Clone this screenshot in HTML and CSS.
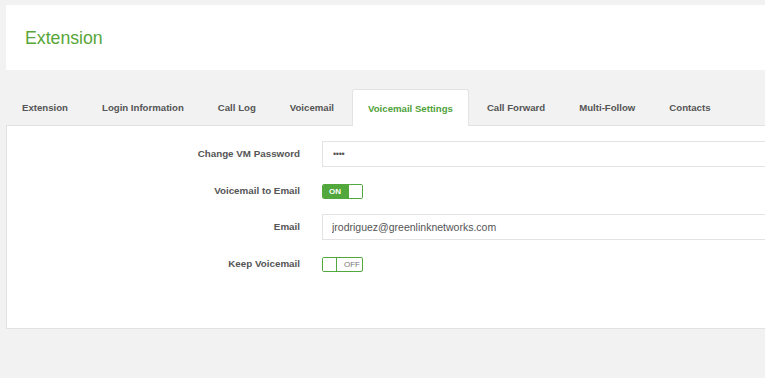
FILE: index.html
```html
<!DOCTYPE html>
<html lang="en">
<head>
    <meta charset="UTF-8">
    <title>Extension - Voicemail Settings</title>
    <link rel="stylesheet" href="styles.css">
</head>
<body>

<div class="page">
    <header class="page-header">
        <h1>Extension</h1>
    </header>

    <ul class="nav-tabs">
        <li class="tab">Extension</li>
        <li class="tab">Login Information</li>
        <li class="tab">Call Log</li>
        <li class="tab">Voicemail</li>
        <li class="tab active">Voicemail Settings</li>
        <li class="tab">Call Forward</li>
        <li class="tab">Multi-Follow</li>
        <li class="tab">Contacts</li>
    </ul>

    <div class="tab-panel">
        <form class="settings-form">
            <div class="form-row">
                <label>Change VM Password</label>
                <input type="text" class="field field-password" value="&bull;&bull;&bull;&bull;">
            </div>
            <div class="form-row toggle-row">
                <label>Voicemail to Email</label>
                <div class="switch on">
                    <span class="switch-label">ON</span>
                    <span class="switch-knob"></span>
                </div>
            </div>
            <div class="form-row">
                <label>Email</label>
                <input type="text" class="field" value="jrodriguez@greenlinknetworks.com">
            </div>
            <div class="form-row toggle-row">
                <label>Keep Voicemail</label>
                <div class="switch off">
                    <span class="switch-knob"></span>
                    <span class="switch-label">OFF</span>
                </div>
            </div>
        </form>
    </div>
</div>

</body>
</html>
```

FILE: styles.css
```css
html, body {
    overflow: hidden;
}
body {
    font-family: "Liberation Sans", Arial, sans-serif;
    background-color: #f2f2f2;
    margin: 0;
    padding: 5px 0 0 6px;
    color: #555;
}
.page {
    width: 1100px;
}
.page-header {
    background-color: #fff;
    height: 65px;
    padding: 0 19px;
    box-sizing: border-box;
    display: flex;
    align-items: center;
}
.page-header h1 {
    margin: 0;
    font-size: 17.7px;
    font-weight: normal;
    color: #58a639;
    padding-top: 1px;
}
.nav-tabs {
    list-style: none;
    margin: 19px 0 0 0;
    padding: 0;
    display: flex;
    position: relative;
    z-index: 1;
}
.tab {
    height: 36px;
    box-sizing: border-box;
    padding: 0 15px;
    margin-right: 2px;
    border: 1px solid transparent;
    border-bottom: none;
    display: flex;
    align-items: center;
    font-size: 9.65px;
    font-weight: bold;
    color: #555;
    cursor: pointer;
}
.tab.active {
    background-color: #fff;
    border-color: #e3e3e3;
    border-radius: 3px 3px 0 0;
    color: #4fa23a;
    height: 37px;
    margin-bottom: -1px;
}
.tab-panel {
    background-color: #fff;
    border: 1px solid #e2e2e2;
    height: 204px;
    box-sizing: border-box;
    padding-top: 15px;
}
.settings-form {
    display: flex;
    flex-direction: column;
    gap: 15px;
}
.form-row {
    display: grid;
    grid-template-columns: 293px 1fr;
    column-gap: 22px;
    align-items: center;
}
.form-row label {
    text-align: right;
    font-size: 9.8px;
    font-weight: bold;
    color: #555;
    margin-top: -2px;
}
.field {
    height: 26px;
    box-sizing: border-box;
    border: 1px solid #e3e3e3;
    padding: 0 9px;
    font-family: "Liberation Sans", Arial, sans-serif;
    font-size: 10.5px;
    color: #555;
    outline: none;
}
.field-password {
    font-size: 9px;
    letter-spacing: -0.3px;
    padding-left: 10px;
}
.toggle-row {
    height: 17px;
}
.toggle-row label {
    margin-top: 0;
}
.switch {
    margin-top: 2px;
    width: 41px;
    height: 15px;
    box-sizing: border-box;
    border: 1px solid #52a83d;
    border-radius: 2px;
    display: flex;
    overflow: hidden;
}
.switch-label {
    flex: 1;
    font-size: 8px;
    font-weight: bold;
    line-height: 13px;
    padding-left: 6px;
}
.switch-knob {
    width: 13px;
    background-color: #fff;
}
.switch.on .switch-label {
    background-color: #52a83d;
    color: #fff;
}
.switch.off .switch-knob {
    border-right: 1px solid #52a83d;
}
.switch.off .switch-label {
    color: #777;
    font-weight: normal;
    padding-left: 7px;
}
```
